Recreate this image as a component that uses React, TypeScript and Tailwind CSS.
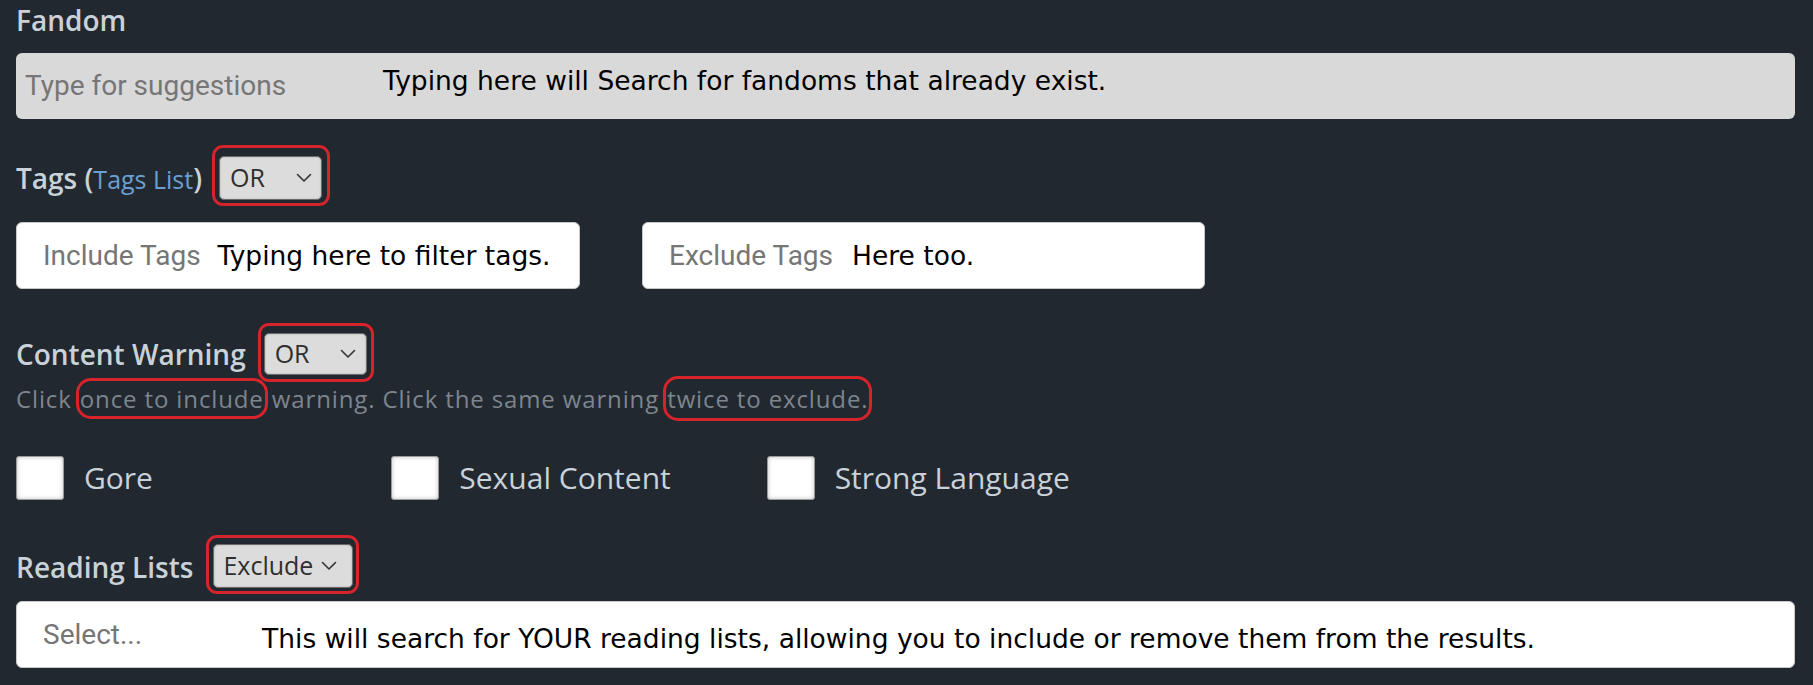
const labelText = "font-['Open_Sans',sans-serif] text-[28px] font-semibold leading-[36px] text-[#c9d1d9]";
const placeholder = "font-['Roboto',sans-serif] text-[28px] text-[#767676]";
const note = "font-['DejaVu_Sans',sans-serif] text-[26.5px] text-black whitespace-nowrap";

// red hand-drawn marker around a dropdown
function Marked({ children, pad }: { children: React.ReactNode; pad: string }) {
  return <div className={`flex rounded-[11px] border-[3px] border-[#d7232b] ${pad}`}>{children}</div>;
}

function Chevron() {
  return (
    <svg width="16" height="10" viewBox="0 0 16 10" fill="none" className="shrink-0">
      <path d="M1.5 1.5 8 8l6.5-6.5" stroke="#333" strokeWidth="1.6" strokeLinecap="round" strokeLinejoin="round" />
    </svg>
  );
}

function Picker({ value, className }: { value: string; className: string }) {
  return (
    <div
      className={`flex items-center rounded-[5px] border border-[#6b6b6b] bg-[#dcdcdc] font-['Open_Sans',sans-serif] text-[25px] text-[#2f2f2f] shadow-[inset_0_0_2px_rgba(0,0,0,0.25)] ${className}`}
    >
      <span>{value}</span>
      <Chevron />
    </div>
  );
}

function Checkbox({ label }: { label: string }) {
  return (
    <div className="flex items-center gap-[20px]">
      <span className="h-[44px] w-[48px] rounded-[3px] border border-[#9a9a9a] bg-white shadow-[inset_0_0_4px_rgba(0,0,0,0.25)]" />
      <span className="font-['Open_Sans',sans-serif] text-[30px] text-[#c9d1d9]">{label}</span>
    </div>
  );
}

export default function App() {
  return (
    <div className="min-h-screen bg-[#22282f] pl-[16px] pr-[18px] pt-[2px]">
      <div className={labelText}>Fandom</div>
      <div className="mt-[15px] flex h-[66px] items-center rounded-[6px] bg-[#d9d9d9] pl-[9px]">
        <span className={placeholder}>Type for suggestions</span>
        <span className={`${note} mb-[10px] ml-[97px]`}>Typing here will Search for fandoms that already exist.</span>
      </div>

      <div className="mt-[26px] flex items-center gap-[10px]">
        <div className={`${labelText} pt-[6px]`}>
          Tags (<span className="text-[25px] font-normal text-[#6b9fd3]">Tags List</span>)
        </div>
        <Marked pad="pl-[4px] pr-[5px] pt-[8px] pb-[3px]">
          <Picker value="OR" className="h-[44px] w-[103px] justify-between pl-[10px] pr-[9px]" />
        </Marked>
      </div>

      <div className="mt-[16px] flex gap-[62px]">
        <div className="flex h-[67px] w-[564px] items-center rounded-[6px] border border-[#c8c8c8] bg-white pl-[26px]">
          <span className={placeholder}>Include Tags</span>
          <span className={`${note} ml-[17px]`}>Typing here to filter tags.</span>
        </div>
        <div className="flex h-[67px] w-[563px] items-center rounded-[6px] border border-[#c8c8c8] bg-white pl-[26px]">
          <span className={placeholder}>Exclude Tags</span>
          <span className={`${note} ml-[19px]`}>Here too.</span>
        </div>
      </div>

      <div className="mt-[34px] flex items-center gap-[12px]">
        <div className={`${labelText} pt-[2px]`}>Content Warning</div>
        <Marked pad="pl-[3px] pr-[4px] pt-[7px] pb-[4px]">
          <Picker value="OR" className="h-[42px] w-[103px] justify-between pl-[10px] pr-[10px]" />
        </Marked>
      </div>

      <p className="mt-[2px] font-['Open_Sans',sans-serif] text-[24px] leading-[30px] tracking-[0.87px] text-[#7d858e]">
        Click{' '}
        <span className="rounded-[12px] px-[1px] py-[1px] ring-[3px] ring-[#d7232b]">once to include</span>{' '}
        warning. Click the same warning{' '}
        <span className="rounded-[12px] px-[1px] py-[3px] ring-[3px] ring-[#d7232b]">twice to exclude.</span>
      </p>

      <div className="mt-[41px] grid w-[1126px] grid-cols-3">
        <Checkbox label="Gore" />
        <Checkbox label="Sexual Content" />
        <Checkbox label="Strong Language" />
      </div>

      <div className="mt-[35px] flex items-center gap-[13px]">
        <div className={`${labelText} pt-[5px]`}>Reading Lists</div>
        <Marked pad="pl-[4px] pr-[3px] pt-[6px] pb-[3px]">
          <Picker value="Exclude" className="h-[44px] w-[140px] gap-[8px] pl-[9px]" />
        </Marked>
      </div>

      <div className="mt-[7px] flex h-[67px] items-center rounded-[6px] border border-[#c8c8c8] bg-white pl-[26px]">
        <span className={placeholder}>Select...</span>
        <span className={`${note} ml-[120px] mt-[9px]`}>
          This will search for YOUR reading lists, allowing you to include or remove them from the results.
        </span>
      </div>
    </div>
  );
}
